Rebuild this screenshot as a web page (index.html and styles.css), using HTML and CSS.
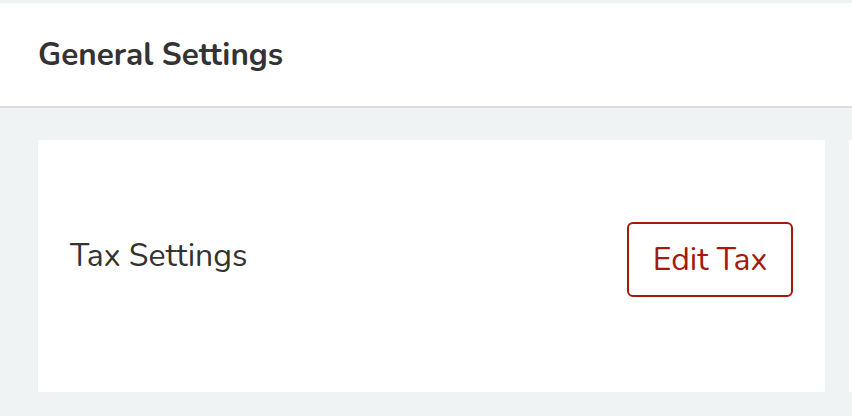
FILE: index.html
```html
<!DOCTYPE html>
<html>
<head>
<meta charset="utf-8">
<link rel="stylesheet" href="styles.css">
</head>
<body>
<header class="page-header">
  <h1 class="page-title">General Settings</h1>
</header>
<main class="content">
  <section class="card">
    <div class="card-row">
      <span class="card-label">Tax Settings</span>
      <button class="btn-outline">Edit Tax</button>
    </div>
  </section>
  <section class="card"></section>
</main>
</body>
</html>
```
FILE: styles.css
```css
html, body {
  margin: 0;
  padding: 0;
}
body {
  background: #eff3f4;
  font-family: "Nunito", "Lato", "Open Sans", sans-serif;
  color: #333;
  overflow: hidden;
  width: 852px;
  height: 416px;
  padding-top: 3px;
  box-sizing: border-box;
}
.page-header {
  background: #fff;
  border-bottom: 2px solid #dcdede;
  display: flex;
  align-items: center;
  padding-left: 38px;
  box-sizing: border-box;
  height: 105px;
}
.page-title {
  margin: 0 0 1px 0;
  font-size: 31.5px;
  font-weight: 700;
  color: #333;
}
.content {
  display: flex;
  gap: 24px;
  padding: 32px 0 0 38px;
  overflow: hidden;
}
.card {
  background: #fff;
  width: 787px;
  height: 252px;
  flex: none;
}
.card-row {
  display: flex;
  align-items: center;
  justify-content: space-between;
  height: 100%;
  box-sizing: border-box;
  padding: 0 32px 22px 32px;
}
.card-label {
  font-size: 32px;
  color: #333;
}
.btn-outline {
  font-family: inherit;
  font-size: 32px;
  color: #a3190b;
  background: #fff;
  border: 2px solid #a3190b;
  border-radius: 6px;
  width: 166px;
  height: 75px;
  padding: 0;
  margin-top: 9px;
}
```
